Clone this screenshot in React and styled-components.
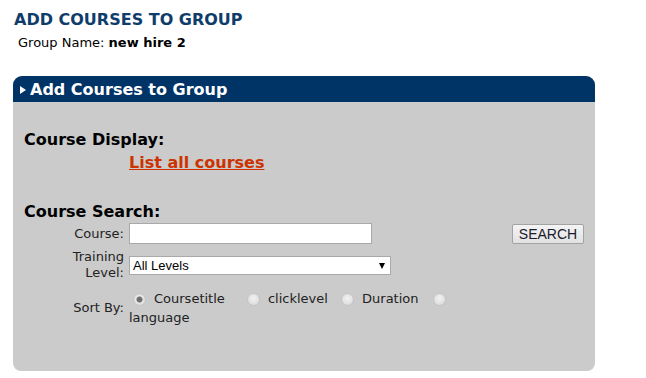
import React from 'react';
import styled, { createGlobalStyle } from 'styled-components';

const GlobalStyle = createGlobalStyle`
  body {
    margin: 0;
    background: #ffffff;
    font-family: "DejaVu Sans", Verdana, sans-serif;
    font-size: 13px;
    color: #000;
  }
`;

const Page = styled.div`
  padding: 10px 13px 0;
  width: 582px;
`;

const Title = styled.h1`
  margin: 0 0 0 1px;
  font-size: 16px;
  line-height: 19px;
  font-weight: bold;
  color: #0f3d6b;
`;

const GroupName = styled.div`
  margin-top: 6px;
  padding-left: 5px;
  line-height: 15px;

  b {
    font-weight: bold;
  }
`;

const Panel = styled.section`
  margin-top: 26px;
  background: #cbcbcb;
  border-radius: 9px 9px 8px 8px;
  overflow: hidden;
`;

const PanelHeader = styled.div`
  height: 26px;
  display: flex;
  align-items: center;
  gap: 4px;
  padding-left: 7px;
  background: #003366;
  color: #fff;
  font-size: 16px;
  font-weight: bold;
`;

const Arrow = styled.span`
  width: 0;
  height: 0;
  border-top: 4px solid transparent;
  border-bottom: 4px solid transparent;
  border-left: 6px solid #fff;
  margin-top: 1px;
`;

const PanelBody = styled.div`
  padding: 28px 11px 44px;
`;

const SectionTitle = styled.h2`
  margin: ${p => p.$top || 0}px 0 0;
  font-size: 16px;
  line-height: 19px;
  font-weight: bold;
`;

const DisplayLink = styled.a`
  display: inline-block;
  margin: 4px 0 0 105px;
  font-size: 16px;
  line-height: 19px;
  font-weight: bold;
  color: #cc3300;
  text-decoration: underline;
`;

const Form = styled.div`
  display: grid;
  grid-template-columns: 80px 330px 1fr;
  column-gap: 5px;
  row-gap: 5px;
  margin: 2px 0 0 20px;
  align-items: center;
`;

const Label = styled.label`
  text-align: right;
  line-height: 16px;
  color: #222;
`;

const TextInput = styled.input`
  box-sizing: border-box;
  width: 243px;
  height: 21px;
  margin: 0;
  border: 1px solid #a9a9a9;
  background: #fff;
  font-family: "Liberation Sans", Arial, sans-serif;
  font-size: 13px;
`;

const SearchButton = styled.button`
  justify-self: end;
  box-sizing: border-box;
  width: 72px;
  height: 20px;
  padding: 0;
  border: 1px solid #a3a3a3;
  border-radius: 2px;
  background: linear-gradient(#f4f4f4, #e2e2e2);
  font-family: "Liberation Sans", Arial, sans-serif;
  font-size: 14px;
  color: #1a1a2e;
`;

const SelectWrap = styled.div`
  position: relative;
  width: 262px;
  height: 19px;
`;

const Select = styled.select`
  appearance: none;
  box-sizing: border-box;
  width: 100%;
  height: 19px;
  margin: 0;
  padding: 0 0 0 3px;
  border: 1px solid #a9a9a9;
  border-radius: 0;
  background: #fff;
  font-family: "Liberation Sans", Arial, sans-serif;
  font-size: 13px;
  color: #000;
`;

const SelectArrow = styled.span`
  position: absolute;
  right: 6px;
  top: 7px;
  width: 0;
  height: 0;
  border-left: 3.5px solid transparent;
  border-right: 3.5px solid transparent;
  border-top: 6px solid #000;
  pointer-events: none;
`;

const SortLabel = styled(Label)`
  margin-top: 3px;
`;

const Options = styled.div`
  margin-top: 3px;
  line-height: 19px;
  color: #222;
`;

const Option = styled.span`
  margin-right: ${p => p.$gap}px;
`;

const Radio = styled.input.attrs({ type: 'radio' })`
  appearance: none;
  box-sizing: border-box;
  width: 13px;
  height: 13px;
  margin: 0 8px 0 4px;
  vertical-align: -3px;
  border-radius: 50%;
  border: 1px solid #c4c4c4;
  background: radial-gradient(circle at 50% 40%, #f2f2f2, #d6d6d6);

  &:checked {
    background: radial-gradient(circle, #707070 0 2.5px, #e6e6e6 3.5px, #d4d4d4);
  }
`;

const sortOptions = [
  { id: 'coursetitle', label: 'Coursetitle', gap: 14, checked: true },
  { id: 'clicklevel', label: 'clicklevel', gap: 5 },
  { id: 'duration', label: 'Duration', gap: 6 },
  { id: 'language', label: 'language', gap: 0 },
];

export default function App() {
  return (
    <Page>
      <GlobalStyle />
      <Title>ADD COURSES TO GROUP</Title>
      <GroupName>
        Group Name: <b>new hire 2</b>
      </GroupName>

      <Panel>
        <PanelHeader>
          <Arrow />
          Add Courses to Group
        </PanelHeader>
        <PanelBody>
          <SectionTitle>Course Display:</SectionTitle>
          <DisplayLink href="#">List all courses</DisplayLink>

          <SectionTitle $top={30}>Course Search:</SectionTitle>
          <Form>
            <Label>Course:</Label>
            <div><TextInput type="text" /></div>
            <SearchButton>SEARCH</SearchButton>

            <Label>Training Level:</Label>
            <SelectWrap>
              <Select defaultValue="all">
                <option value="all">All Levels</option>
              </Select>
              <SelectArrow />
            </SelectWrap>
            <div />

            <SortLabel>Sort By:</SortLabel>
            <Options>
              {sortOptions.map(o => (
                <React.Fragment key={o.id}>
                  <Radio name="sort" defaultChecked={o.checked} />
                  <Option $gap={o.gap}>{o.label}</Option>{' '}
                </React.Fragment>
              ))}
            </Options>
            <div />
          </Form>
        </PanelBody>
      </Panel>
    </Page>
  );
}
